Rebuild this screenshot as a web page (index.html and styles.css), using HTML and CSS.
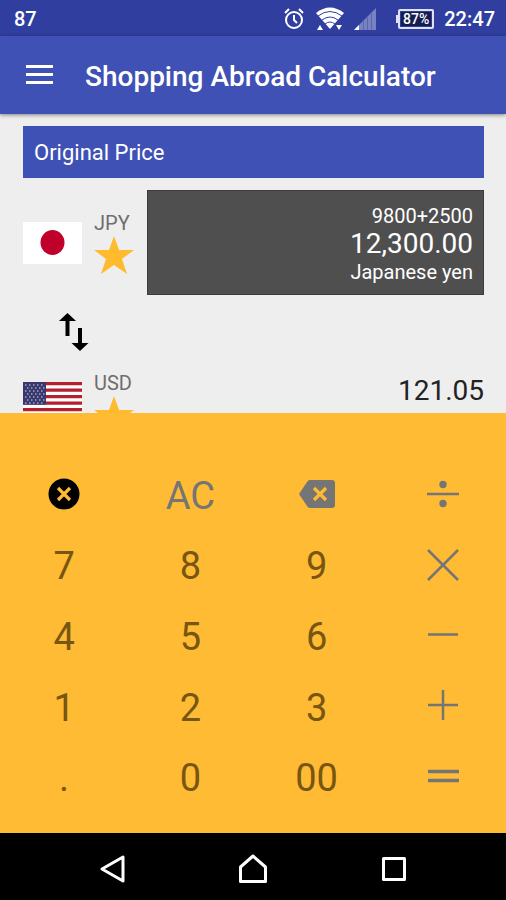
FILE: index.html
```html
<!DOCTYPE html>
<html lang="en">
<head>
<meta charset="utf-8">
<meta name="viewport" content="width=device-width, initial-scale=1">
<title>Shopping Abroad Calculator</title>
<link rel="stylesheet" href="styles.css">
</head>
<body>
<div class="status">
  <span class="status-count">87</span>
  <svg class="alarm" width="20" height="22" viewBox="0 0 20 22" fill="none" stroke="#fff" stroke-width="2"><circle cx="10" cy="12" r="8"/><path d="M10 7v5l3 3M1 5l4-4M19 5l-4-4"/></svg>
  <svg class="wifi" width="28" height="24" viewBox="0 0 28 24"><path d="M0 6Q14-5 28 6L14 22Z" fill="#fff"/><path d="M2 9q12-9 24 0M6 13q8-6 16 0M9 17q5-4 10 0" fill="none" stroke="#303f9f" stroke-width="1"/><path d="M1 23l3-5 3 5zM20 18h6l-3 5z" fill="#fff"/></svg>
  <svg class="signal" width="22" height="22" viewBox="0 0 22 22"><path d="M0 22L22 0V22Z" fill="#7882c0"/><path d="M0 22l5-5v5z" fill="#fff"/><path d="M9.500 12v10M13.500 8v14M17.500 4v18" stroke="#5966b2"/></svg>
  <span class="battery"><span class="battery-level">87%</span></span>
  <span class="clock">22:47</span>
</div>
<header class="appbar">
  <button class="menu" aria-label="Menu"><svg width="28" height="20" viewBox="0 0 28 20" fill="#fff"><path d="M1 0h27v3H1zM1 8h27v3H1zM1 16h27v3H1z"/></svg></button>
  <h1>Shopping Abroad Calculator</h1>
</header>
<main class="content">
  <h2>Original Price</h2>
  <section class="currency">
    <svg class="flag" width="59" height="42" viewBox="0 0 59 42"><path fill="#fff" d="M0 0h59v42H0z"/><ellipse cx="29.500" cy="20.500" rx="12" ry="12.500" fill="#c0002b"/></svg>
    <div class="code">
      <span>JPY</span>
      <button class="star" aria-label="Favourite JPY"><svg width="40" height="38" viewBox="0 0 40 38"><path fill="#ffbb2e" d="M20 0l5 14h15L28 23l5 15-13-9-13 9 5-15L0 14h15z"/></svg></button>
    </div>
    <div class="display">
      <span class="expression">9800+2500</span>
      <span class="amount">12,300.00</span>
      <span class="name">Japanese yen</span>
    </div>
  </section>
  <button class="swap" aria-label="Swap currencies"><svg width="30" height="38" viewBox="0 0 30 38"><path d="M8.500 0L17 8h-6.500v15h-4V8H0zM19 15h4v15h6.500L21 38l-8.500-8H19z"/></svg></button>
  <section class="currency">
    <svg class="flag" width="59" height="42" viewBox="0 0 59 42"><path fill="#fff" d="M0 0h59v42H0z"/><path d="M0 1.600h59M0 8.100h59M0 14.600h59M0 21.100h59M0 27.600h59M0 34h59M0 40.400h59" stroke="#b5202e" stroke-width="3.200"/><path fill="#38386f" d="M0 0h23v22.600H0z"/><path d="M2 3h20M4 6h18M2 9h20M4 12h18M2 15h20M4 18h18M2 21h20" stroke="#a3a3c6" stroke-width="1.300" stroke-dasharray="1.500 2.500"/></svg>
    <div class="code">
      <span>USD</span>
      <button class="star" aria-label="Favourite USD"><svg width="40" height="38" viewBox="0 0 40 38"><path fill="#ffbb2e" d="M20 0l5 14h15L28 23l5 15-13-9-13 9 5-15L0 14h15z"/></svg></button>
    </div>
    <div class="result">121.05</div>
  </section>
</main>
<div class="keypad">
  <button aria-label="Close"><svg width="32" height="32" viewBox="0 0 32 32"><circle cx="16" cy="16" r="15.500"/><path d="M10 10l12 12M22 10L10 22" stroke="#ffbb33" stroke-width="3.200"/></svg></button>
  <button class="clear">AC</button>
  <button aria-label="Backspace"><svg width="36" height="28" viewBox="0 0 36 28"><path fill="#757575" d="M11 0H33q3 0 3 3V25q0 3-3 3H11q-2 0-3-2L0 14 8 2q1-2 3-2z"/><path d="M15 8l12 12M27 8L15 20" stroke="#ffbb33" stroke-width="3.200"/></svg></button>
  <button aria-label="Divide"><svg class="op" width="32" height="32" viewBox="0 0 32 32"><path d="M0 16h32"/><circle cx="16" cy="6.500" r="3.700"/><circle cx="16" cy="25.500" r="3.700"/></svg></button>
  <button class="digit">7</button><button class="digit">8</button><button class="digit">9</button>
  <button aria-label="Multiply"><svg class="op" width="32" height="32" viewBox="0 0 32 32"><path d="M1 1l30 30M31 1L1 31"/></svg></button>
  <button class="digit">4</button><button class="digit">5</button><button class="digit">6</button>
  <button aria-label="Subtract"><svg class="op" width="32" height="32" viewBox="0 0 32 32"><path d="M1 15.500h30"/></svg></button>
  <button class="digit">1</button><button class="digit">2</button><button class="digit">3</button>
  <button aria-label="Add"><svg class="op" width="32" height="32" viewBox="0 0 32 32"><path d="M1 15h30M16 0v30"/></svg></button>
  <button class="digit">.</button><button class="digit">0</button><button class="digit">00</button>
  <button aria-label="Equals"><svg class="op thick" width="32" height="32" viewBox="0 0 32 32"><path d="M1 10.500h31M1 19.500h31"/></svg></button>
</div>
<nav class="navbar">
  <button aria-label="Back"><svg width="28" height="30" viewBox="0 0 28 30"><path d="M4 15L25 3V27Z"/></svg></button>
  <button aria-label="Home"><svg width="28" height="30" viewBox="0 0 28 30"><path d="M1.500 27.500V13L14 2 26.500 13V27.500Z"/></svg></button>
  <button aria-label="Recent apps"><svg width="28" height="30" viewBox="0 0 28 30"><path d="M3.500 4.500h21v21h-21z"/></svg></button>
</nav>
</body>
</html>
```
FILE: styles.css
```css
* { box-sizing: border-box; }
body {
  margin: 0;
  height: 100vh;
  display: flex;
  flex-direction: column;
  font-family: Roboto, sans-serif;
  background: #eee;
}
h1, h2 { margin: 0; font-weight: 500; }
button {
  display: flex;
  align-items: center;
  justify-content: center;
  padding: 0;
  border: 0;
  background: none;
  font: inherit;
  color: inherit;
}
svg { display: block; flex: none; }

.status {
  flex: none;
  height: 36px;
  padding: 2px 11px 0 14px;
  display: flex;
  align-items: center;
  background: #303f9f;
  color: #fff;
  font-size: 20px;
  font-weight: 500;
}
.status-count { margin-right: auto; }
.wifi { margin-left: 12px; }
.signal { margin-left: 10px; }
.battery {
  position: relative;
  margin: 0 10px 0 22px;
  padding: 1px;
  border: 2px solid #dfe2f2;
  border-radius: 2px;
}
.battery::before {
  content: "";
  position: absolute;
  top: 4px;
  left: -4px;
  width: 3px;
  height: 8px;
  background: #dfe2f2;
}
.battery-level {
  display: block;
  padding: 0 2px;
  background: #141c50;
  font-size: 14px;
  line-height: 14px;
}

.appbar {
  flex: none;
  height: 78px;
  padding: 0 25px;
  display: flex;
  align-items: center;
  gap: 32px;
  background: #3f51b5;
  color: #fff;
  box-shadow: 0 1px 4px rgba(0, 0, 0, .45);
  z-index: 1;
}
.appbar h1 { padding-top: 4px; font-size: 28px; line-height: 40px; white-space: nowrap; }

.content {
  flex: 1;
  min-height: 0;
  overflow: hidden;
  padding: 12px 22px 0 23px;
}
.content h2 {
  padding: 2px 11px 0;
  margin-bottom: 12px;
  background: #3f51b5;
  color: #fff;
  font-size: 22px;
  font-weight: 400;
  line-height: 50px;
}
.currency { display: flex; align-items: flex-start; }
.flag { margin-top: 32px; }
.code {
  width: 65px;
  margin-top: 20px;
  padding-left: 12px;
  color: #6e6e6e;
  font-size: 20px;
  line-height: 26px;
}
.display {
  flex: 1;
  padding: 12px 10px 9px;
  display: flex;
  flex-direction: column;
  text-align: right;
  background: #4f4f4f;
  border: 1px solid #3c3c3c;
  color: #fff;
  font-size: 20px;
  line-height: 26px;
}
.amount, .result { font-size: 28px; line-height: 30px; }
.result { flex: 1; margin-top: 26px; text-align: right; color: #222; }
.swap { margin: 18px 0 0 36px; }
.swap + .currency { margin-top: -1px; }

.keypad {
  flex: none;
  height: 420px;
  padding: 46px 0 21px 1px;
  display: grid;
  grid-template-columns: repeat(4, 1fr);
  grid-template-rows: repeat(5, 1fr);
  background: #ffbb33;
  color: #775612;
  font-size: 38px;
}
.clear, .digit { padding-top: 3px; }
.clear { color: #757575; }
.op { stroke: #757575; stroke-width: 2.500; fill: #757575; }
.op circle { stroke: none; }
.thick { stroke-width: 3.500; }

.navbar {
  flex: none;
  height: 67px;
  padding: 4px 42px 0;
  display: grid;
  grid-template-columns: repeat(3, 1fr);
  background: #000;
}
.navbar svg { fill: none; stroke: #fff; stroke-width: 3; stroke-linejoin: round; }
```
